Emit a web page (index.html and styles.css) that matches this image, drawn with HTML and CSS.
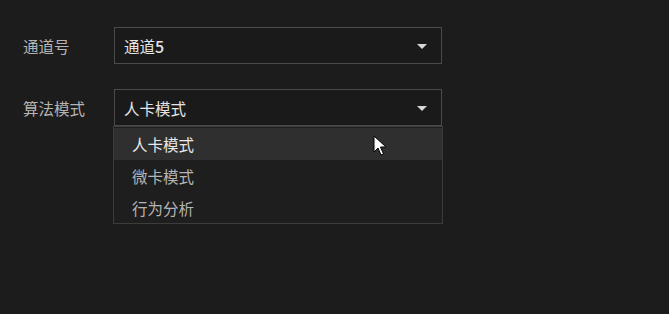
FILE: index.html
```html
<!DOCTYPE html>
<html lang="zh">
<head>
<meta charset="utf-8">
<link rel="stylesheet" href="styles.css">
</head>
<body>
<div class="form">
  <div class="row">
    <div class="label">通道号</div>
    <div class="select">
      <span class="value">通道<span class="num">5</span></span>
      <span class="arrow"></span>
    </div>
  </div>
  <div class="row">
    <div class="label">算法模式</div>
    <div class="select open">
      <span class="value">人卡模式</span>
      <span class="arrow"></span>
      <ul class="menu">
        <li class="item hover">人卡模式</li>
        <li class="item">微卡模式</li>
        <li class="item">行为分析</li>
      </ul>
    </div>
  </div>
</div>
<svg class="cursor" width="14" height="22" viewBox="0 0 14 22">
  <path d="M1 1 L1 17 L5 13 L8 20 L10.5 19 L7.5 12 L13 12 Z" fill="#ffffff" stroke="#000000" stroke-width="1"/>
</svg>
</body>
</html>
```
FILE: styles.css
```css
html, body {
  margin: 0;
  padding: 0;
  background: #1c1c1c;
  width: 669px;
  height: 314px;
  overflow: hidden;
  font-family: "Noto Sans CJK SC", "Noto Sans", sans-serif;
}
.form {
  padding: 27px 0 0 23px;
  display: flex;
  flex-direction: column;
  gap: 25px;
}
.row {
  display: flex;
  align-items: center;
}
.label {
  width: 91px;
  font-size: 15.5px;
  color: #b4b4b4;
}
.select {
  position: relative;
  box-sizing: border-box;
  width: 328px;
  height: 37px;
  border: 1px solid #4a4a4a;
  background: #1a1a1a;
  display: flex;
  align-items: center;
  padding-left: 9px;
}
.value {
  font-size: 15.5px;
  color: #e4e4e4;
  flex: 1;
}
.num {
  font-size: 16px;
  font-weight: 500;
}
.arrow {
  width: 0;
  height: 0;
  border-left: 5px solid transparent;
  border-right: 5px solid transparent;
  border-top: 5px solid #d8d8d8;
  margin-right: 14px;
  margin-top: 1px;
}
.menu {
  position: absolute;
  left: -2px;
  top: 36px;
  width: 330px;
  box-sizing: border-box;
  margin: 0;
  padding: 1px 0 0;
  list-style: none;
  background: #1e1e1e;
  border: 1px solid #3c3c3c;
  height: 98px;
}
.item {
  height: 32px;
  line-height: 32px;
  padding-left: 18px;
  font-size: 15.5px;
  color: #b4b4b4;
}
.item.hover {
  background: #2f2f2f;
  color: #e8e8e8;
}
.cursor {
  position: absolute;
  left: 373px;
  top: 135px;
}
```
